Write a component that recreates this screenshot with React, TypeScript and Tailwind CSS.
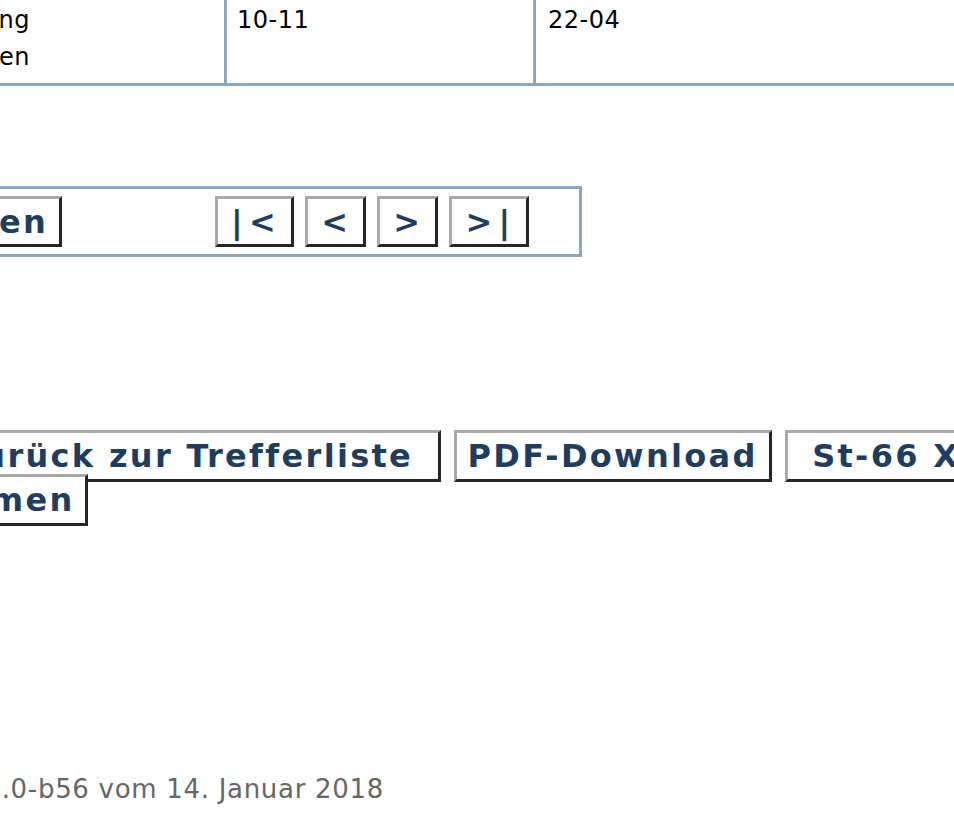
import React from "react";

const btn =
  "shrink-0 flex items-center justify-center bg-white border-[3px] border-t-[#a9a9a9] border-l-[#a9a9a9] border-b-[#262626] border-r-[#262626] text-[32px] font-bold tracking-[2.3px] text-[#1f3d5e] whitespace-nowrap leading-none";

const pager = [
  ["|", "<"],
  ["<"],
  [">"],
  [">", "|"],
];

const actions = [
  "Hilfe",
  "Zurück zur Trefferliste\u00a0",
  "PDF-Download",
  "\u00a0St-66 XML-Export\u00a0",
  "Übernehmen",
];

export default function App() {
  return (
    <div className="w-[954px] h-[832px] overflow-hidden bg-white font-['DejaVu_Sans',Verdana,sans-serif]">
      {/* end of the result table */}
      <div className="flex w-[1300px] border-b-[3px] border-[#8da7c1] text-[24px] leading-[37px] tracking-[0.5px] text-black">
        <div className="w-[224px] shrink-0 flex flex-col items-end pr-[194px] pt-[2px] pb-[7px] whitespace-nowrap">
          <span>Bezeichnung</span>
          <span>Bemerkungen</span>
        </div>
        <div className="w-[309px] shrink-0 border-l-[3px] border-[#8da7c1] pl-[10px] pt-[2px] pb-[7px]">
          10-11
        </div>
        <div className="flex-1 border-l-[3px] border-[#8da7c1] pl-[12px] pt-[2px] pb-[7px]">
          22-04
        </div>
      </div>

      {/* paging */}
      <div className="mt-[100px] -ml-[18px] w-[600px] flex items-center border-[3px] border-[#8da7c1] py-[7px]">
        <div className="w-[77px] shrink-0 flex justify-end">
          <button className={btn + " h-[51px] px-[11px]"}>Seite wählen</button>
        </div>
        <div className="ml-[153px] flex gap-[11px]">
          {pager.map((p, i) => (
            <button key={i} className={btn + " h-[51px] px-[13px] gap-[4px]"}>
              {p.map((c, j) => (
                <span key={j}>{c}</span>
              ))}
            </button>
          ))}
        </div>
      </div>

      {/* actions */}
      <div className="mt-[173px] -ml-[194px] w-[1400px] flex flex-wrap gap-x-[13px]">
        {actions.map((a) => (
          <button key={a} className={btn + " h-[52px] px-[11px] -mb-[8px]"}>
            {a}
          </button>
        ))}
      </div>

      <div className="mt-[255px] w-[384px] flex justify-end whitespace-nowrap text-[26px] leading-[32px] tracking-[0.7px] text-[#666666]">
        Version 4.0-b56 vom 14. Januar 2018
      </div>
    </div>
  );
}
